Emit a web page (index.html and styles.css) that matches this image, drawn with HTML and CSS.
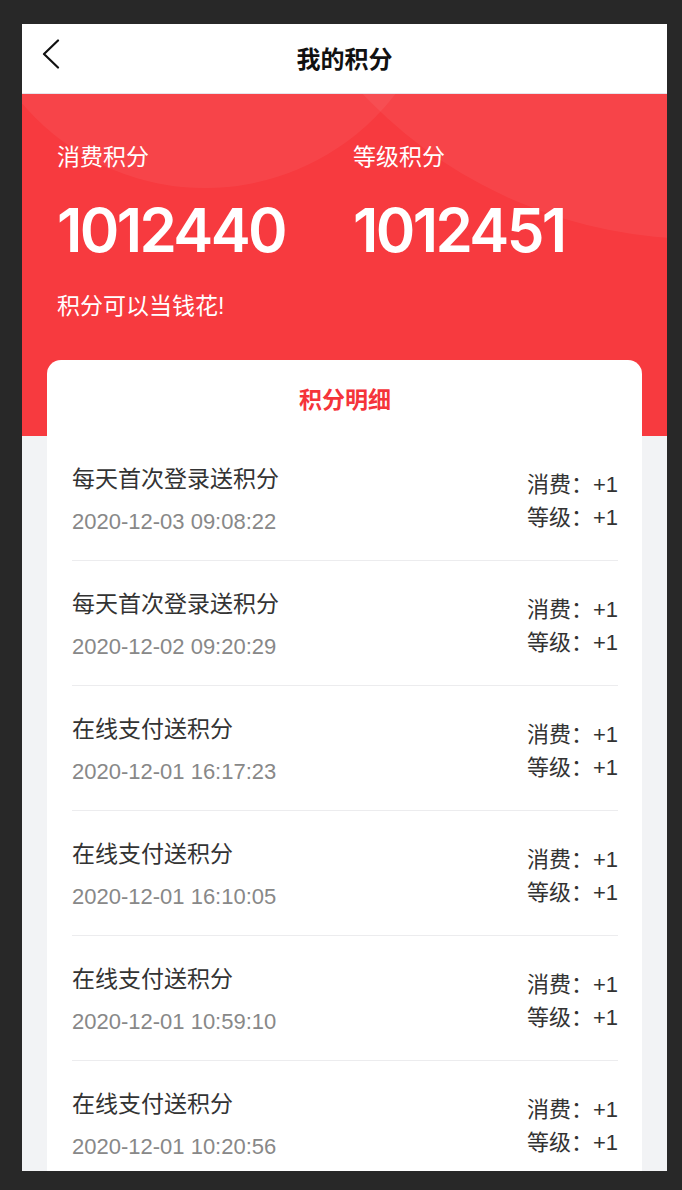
FILE: index.html
```html
<!DOCTYPE html>
<html lang="zh-CN">
<head>
<meta charset="utf-8">
<title>我的积分</title>
<link rel="stylesheet" href="styles.css">
</head>
<body>
<div class="phone">
  <header class="nav">
    <div class="nav-back">
      <svg width="18" height="30" viewBox="0 0 18 30"><polyline points="16,1.5 2,15 16,28.5" fill="none" stroke="#111" stroke-width="2.2" stroke-linecap="round" stroke-linejoin="round"/></svg>
    </div>
    <div class="nav-title">我的积分</div>
    <div></div>
  </header>

  <section class="hero">
    <div class="hero-cols">
      <div class="hero-col">
        <div class="hero-label">消费积分</div>
        <div class="hero-num">1012440</div>
      </div>
      <div class="hero-col">
        <div class="hero-label">等级积分</div>
        <div class="hero-num">1012451</div>
      </div>
    </div>
    <div class="hero-tip">积分可以当钱花!</div>
  </section>

  <section class="card">
    <div class="card-head">积分明细</div>
    <div class="row">
      <div class="row-main"><div class="row-title">每天首次登录送积分</div><div class="row-date">2020-12-03 09:08:22</div></div>
      <div class="row-side"><div>消费：+1</div><div>等级：+1</div></div>
    </div>
    <div class="row">
      <div class="row-main"><div class="row-title">每天首次登录送积分</div><div class="row-date">2020-12-02 09:20:29</div></div>
      <div class="row-side"><div>消费：+1</div><div>等级：+1</div></div>
    </div>
    <div class="row">
      <div class="row-main"><div class="row-title">在线支付送积分</div><div class="row-date">2020-12-01 16:17:23</div></div>
      <div class="row-side"><div>消费：+1</div><div>等级：+1</div></div>
    </div>
    <div class="row">
      <div class="row-main"><div class="row-title">在线支付送积分</div><div class="row-date">2020-12-01 16:10:05</div></div>
      <div class="row-side"><div>消费：+1</div><div>等级：+1</div></div>
    </div>
    <div class="row">
      <div class="row-main"><div class="row-title">在线支付送积分</div><div class="row-date">2020-12-01 10:59:10</div></div>
      <div class="row-side"><div>消费：+1</div><div>等级：+1</div></div>
    </div>
    <div class="row">
      <div class="row-main"><div class="row-title">在线支付送积分</div><div class="row-date">2020-12-01 10:20:56</div></div>
      <div class="row-side"><div>消费：+1</div><div>等级：+1</div></div>
    </div>
  </section>
</div>
</body>
</html>
```

FILE: styles.css
```css
html, body {
  margin: 0;
  padding: 0;
}
body {
  background: #282828;
  height: 1190px;
  overflow: hidden;
  font-family: "Liberation Sans", "Noto Sans CJK SC", sans-serif;
}
.phone {
  margin: 24px 0 0 22px;
  width: 645px;
  height: 1147px;
  overflow: hidden;
  background: #f2f3f5;
}
.nav {
  height: 69px;
  background: #fff;
  border-bottom: 1px solid #e6e4ec;
  display: grid;
  grid-template-columns: 80px 1fr 80px;
  align-items: center;
}
.nav-back {
  align-self: start;
  padding: 15px 0 0 20px;
  line-height: 0;
}
.nav-title {
  text-align: center;
  font-size: 24px;
  font-weight: bold;
  color: #111;
  line-height: 32px;
  padding-top: 2px;
}
.hero {
  position: relative;
  overflow: hidden;
  background: #f73a3f;
  padding: 47px 35px 114px;
  color: #fff;
}
.hero::before,
.hero::after {
  content: "";
  position: absolute;
  border-radius: 50%;
  background: rgba(255, 255, 255, 0.055);
}
.hero::before {
  left: -57px;
  top: -386px;
  width: 480px;
  height: 480px;
}
.hero::after {
  left: 213px;
  top: -785px;
  width: 930px;
  height: 930px;
}
.hero-cols {
  position: relative;
  z-index: 1;
  display: grid;
  grid-template-columns: 296px 1fr;
}
.hero-label {
  font-size: 23px;
  line-height: 32px;
}
.hero-num {
  margin-top: 22px;
  font-family: "Inter", "Liberation Sans", sans-serif;
  font-size: 60px;
  font-weight: 600;
  line-height: 70px;
  letter-spacing: -2.6px;
}
.hero-tip {
  position: relative;
  z-index: 1;
  margin-top: 25px;
  font-size: 23px;
  line-height: 32px;
}
.card {
  margin: -76px 25px 0;
  background: #fff;
  border-radius: 14px 14px 0 0;
  padding: 0 24px 0 25px;
  position: relative;
}
.card-head {
  height: 76px;
  display: flex;
  align-items: center;
  justify-content: center;
  font-size: 23px;
  font-weight: bold;
  color: #f5343a;
}
.row {
  display: flex;
  justify-content: space-between;
  align-items: center;
  padding: 26px 0 21px;
  border-bottom: 1px solid #ececee;
}
.row-title {
  font-size: 23px;
  line-height: 34px;
  color: #333;
}
.row-date {
  margin-top: 9px;
  font-size: 22px;
  line-height: 34px;
  color: #888;
}
.row-side {
  font-size: 22px;
  line-height: 33px;
  color: #333;
  text-align: right;
  margin-top: 0;
}
```
